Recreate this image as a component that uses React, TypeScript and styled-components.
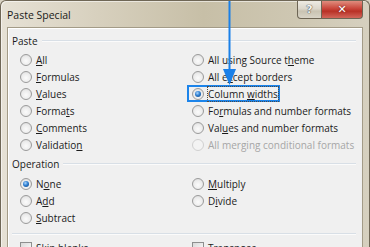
import React from 'react';
import styled, { createGlobalStyle, css } from 'styled-components';

const GlobalStyle = createGlobalStyle`
  html, body {
    margin: 0;
    padding: 0;
    background: #d9d3c4;
  }
  body {
    font-family: 'Open Sans', 'Liberation Sans', sans-serif;
    font-size: 10px;
  }
`;

const Window = styled.div`
  position: relative;
  width: 370px;
  height: 247px;
  box-sizing: border-box;
  overflow: hidden;
  display: flex;
  flex-direction: column;
  border: 1px solid #6f6756;
  border-bottom: none;
  border-radius: 6px 6px 0 0;
  padding: 0 6px;
  background: linear-gradient(to right, #e6e1d5 0%, #d8d1bf 25%, #c7bfa7 55%, #cec7b2 80%, #d6d0bf 100%);
  box-shadow: inset 1px 1px 0 rgba(255, 255, 255, 0.55);
`;

const TitleBar = styled.div`
  height: 26px;
  flex-shrink: 0;
  display: flex;
  align-items: flex-start;
`;

const Title = styled.div`
  align-self: center;
  font-size: 10.5px;
  color: #1a1a1a;
  margin-top: 1px;
`;

const CaptionButtons = styled.div`
  margin-left: auto;
  display: flex;
  height: 18px;
`;

const CaptionButton = styled.div<{ $close?: boolean }>`
  height: 18px;
  box-sizing: border-box;
  display: flex;
  align-items: center;
  justify-content: center;
  border: 1px solid #6d6554;
  border-top: none;
  font-family: 'DejaVu Sans', sans-serif;
  font-weight: bold;
  ${({ $close }) =>
    $close
      ? css`
          width: 41px;
          border-left: none;
          border-radius: 0 0 4px 0;
          background: linear-gradient(to bottom, #e08d7e 0%, #c9453a 45%, #b83126 60%, #d2665a 100%);
          color: #fff;
          font-size: 11px;
          text-shadow: 0 0 2px #5a1810;
        `
      : css`
          width: 25px;
          border-radius: 0 0 0 4px;
          background: linear-gradient(to bottom, #eeebe3 0%, #dcd7cb 45%, #c9c3b2 60%, #d9d4c7 100%);
          color: #f4f4f4;
          font-size: 11px;
          text-shadow: 0 0 1px #3c3c3c, 0 0 1px #3c3c3c;
        `}
`;

const Client = styled.div`
  height: 240px;
  flex-shrink: 0;
  box-sizing: border-box;
  background: #f0f0f0;
  border: 1px solid #a39b87;
  box-shadow: inset 1px 1px 0 #ffffff;
  padding: 5px 6px 0 4px;
  color: #1b1b1b;
`;

const SectionHeader = styled.div<{ $top?: number }>`
  display: flex;
  align-items: center;
  height: 15px;
  margin-top: ${({ $top }) => $top ?? 0}px;
  &::after {
    content: '';
    flex: 1;
    height: 1px;
    margin-left: 4px;
    background: #d8dfe6;
    border-bottom: 1px solid #fbfbfb;
  }
`;

const OptionGrid = styled.div<{ $rows: number; $top: number }>`
  display: grid;
  grid-template-columns: 172px 1fr;
  grid-template-rows: repeat(${({ $rows }) => $rows}, 17px);
  grid-auto-flow: column;
  padding-left: 8px;
  margin-top: ${({ $top }) => $top}px;
`;

const Option = styled.div<{ $disabled?: boolean }>`
  display: flex;
  align-items: center;
  gap: 4px;
  white-space: nowrap;
  color: ${({ $disabled }) => ($disabled ? '#a6a6a6' : '#1b1b1b')};
`;

const Highlight = styled.div`
  display: flex;
  align-items: center;
  gap: 4px;
  height: 17px;
  margin-left: -5px;
  padding: 0 2px 0 5px;
  box-shadow: inset 0 0 0 2px #1c84ea;
`;

const Radio = styled.span<{ $checked?: boolean; $disabled?: boolean }>`
  position: relative;
  width: 12px;
  height: 12px;
  flex-shrink: 0;
  box-sizing: border-box;
  border-radius: 50%;
  border: 1px solid ${({ $disabled }) => ($disabled ? '#d0d0d0' : '#9b9b9b')};
  background: ${({ $disabled }) =>
    $disabled
      ? '#f3f3f3'
      : 'radial-gradient(circle at 50% 60%, #fbfbfb 0%, #ececec 55%, #d2d2d2 100%)'};
  ${({ $checked }) =>
    $checked &&
    css`
      &::after {
        content: '';
        position: absolute;
        inset: 2px;
        border-radius: 50%;
        background: radial-gradient(circle at 40% 35%, #a9d6ff 0%, #2f7fd0 45%, #0f3f7c 100%);
      }
    `}
`;

const Checkbox = styled.span`
  width: 12px;
  height: 12px;
  flex-shrink: 0;
  box-sizing: border-box;
  border: 1px solid #8e8f8f;
  background: linear-gradient(135deg, #d9d9d9 0%, #f4f4f4 70%, #ffffff 100%);
`;

const FocusLabel = styled.span`
  outline: 1px dotted #4a4a4a;
  outline-offset: 0;
`;

const Divider = styled.div`
  height: 1px;
  margin: 7px 0 0 0;
  background: #d8dfe6;
  border-bottom: 1px solid #fbfbfb;
`;

const Arrow = styled.svg`
  position: absolute;
  left: 0;
  top: 0;
  pointer-events: none;
`;

// "&" marks the access key letter
const Label: React.FC<{ text: string }> = ({ text }) => {
  const i = text.indexOf('&');
  if (i < 0) return <>{text}</>;
  return (
    <>
      {text.slice(0, i)}
      <u>{text[i + 1]}</u>
      {text.slice(i + 2)}
    </>
  );
};

type Opt = { text: string; checked?: boolean; disabled?: boolean; focus?: boolean };

const pasteOptions: Opt[] = [
  { text: '&All' },
  { text: '&Formulas' },
  { text: '&Values' },
  { text: 'Forma&ts' },
  { text: '&Comments' },
  { text: 'Validatio&n' },
  { text: 'All using Source t&heme' },
  { text: 'All e&xcept borders' },
  { text: 'Column &widths', checked: true, focus: true },
  { text: 'Fo&rmulas and number formats' },
  { text: 'Val&ues and number formats' },
  { text: 'All merging conditional formats', disabled: true },
];

const operationOptions: (Opt | null)[] = [
  { text: 'N&one', checked: true },
  { text: 'A&dd' },
  { text: '&Subtract' },
  { text: '&Multiply' },
  { text: 'D&ivide' },
  null,
];

const RadioOption: React.FC<{ opt: Opt | null }> = ({ opt }) => {
  if (!opt) return <div />;
  if (opt.focus) {
    return (
      <Option>
        <Highlight>
          <Radio $checked={opt.checked} />
          <FocusLabel>
            <Label text={opt.text} />
          </FocusLabel>
        </Highlight>
      </Option>
    );
  }
  return (
    <Option $disabled={opt.disabled}>
      <Radio $checked={opt.checked} $disabled={opt.disabled} />
      <span>
        <Label text={opt.text} />
      </span>
    </Option>
  );
};

export default function App() {
  return (
    <>
      <GlobalStyle />
      <Window>
        <TitleBar>
          <Title>Paste Special</Title>
          <CaptionButtons>
            <CaptionButton>?</CaptionButton>
            <CaptionButton $close>✕</CaptionButton>
          </CaptionButtons>
        </TitleBar>
        <Client>
          <SectionHeader>Paste</SectionHeader>
          <OptionGrid $rows={6} $top={3}>
            {pasteOptions.map((o) => (
              <RadioOption key={o.text} opt={o} />
            ))}
          </OptionGrid>
          <SectionHeader $top={3}>Operation</SectionHeader>
          <OptionGrid $rows={3} $top={4}>
            {operationOptions.map((o, i) => (
              <RadioOption key={i} opt={o} />
            ))}
          </OptionGrid>
          <Divider />
          <OptionGrid $rows={1} $top={4}>
            <Option>
              <Checkbox />
              <span>S<u>k</u>ip blanks</span>
            </Option>
            <Option>
              <Checkbox />
              <span>Transpos<u>e</u></span>
            </Option>
          </OptionGrid>
        </Client>
        <Arrow width="370" height="90" viewBox="0 0 370 90">
          <line x1="228.5" y1="0" x2="228.5" y2="72" stroke="#1a80e8" strokeWidth="2" />
          <polygon points="222,68 235,68 228.5,84" fill="#1a80e8" />
        </Arrow>
      </Window>
    </>
  );
}
